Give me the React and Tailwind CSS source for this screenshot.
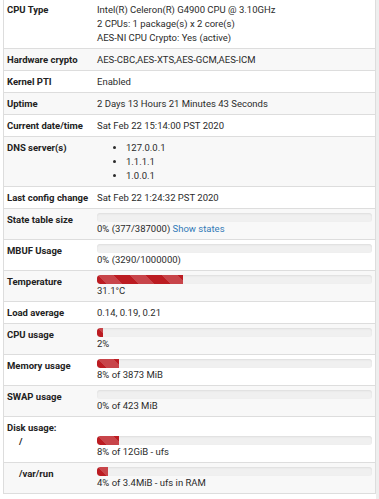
import React from "react";

const stripe =
  "bg-[#bc1c22] bg-[linear-gradient(45deg,rgba(255,255,255,.18)_25%,transparent_25%,transparent_50%,rgba(255,255,255,.18)_50%,rgba(255,255,255,.18)_75%,transparent_75%,transparent)] bg-[length:32px_32px]";

const Bar = ({ pct }) => (
  <div className="h-[9px] w-full rounded-[3px] bg-[#f0f0f0] shadow-[inset_0_1px_2px_rgba(0,0,0,0.08)] overflow-hidden">
    {pct > 0 && <div className={`h-full rounded-l-[3px] ${stripe}`} style={{ width: `${pct}%` }} />}
  </div>
);

const Row = ({ label, children, shade, first, indent }) => (
  <div className={`flex border-b border-[#dddddd] ${shade ? "bg-[#f8f8f8]" : "bg-white"} ${first ? "pt-[3px]" : "pt-[4px]"} pb-[3px]`}>
    <div className={`w-[89px] shrink-0 font-bold text-[#222] ${indent ? "pl-[15px]" : "pl-[3px]"}`}>{label}</div>
    <div className="flex-1 min-w-0 pl-[4px] pr-[3px] text-[#2b2b2b]">{children}</div>
  </div>
);

const BarRow = ({ label, pct, text, shade, indent }) => (
  <Row label={label} shade={shade} indent={indent}>
    <Bar pct={pct} />
    <div>{text}</div>
  </Row>
);

export default function App() {
  return (
    <div className="w-[379px] h-[499px] bg-white flex font-[Roboto,sans-serif] text-[9.5px] leading-[14px] overflow-hidden">
      <div className="w-[3px] shrink-0" />
      <div className="w-[373px] shrink-0 self-start border-l border-r border-[#dddddd]">
        <Row label="CPU Type" first>
          <div>Intel(R) Celeron(R) G4900 CPU @ 3.10GHz</div>
          <div>2 CPUs: 1 package(s) x 2 core(s)</div>
          <div>AES-NI CPU Crypto: Yes (active)</div>
        </Row>
        <Row label="Hardware crypto" shade>AES-CBC,AES-XTS,AES-GCM,AES-ICM</Row>
        <Row label="Kernel PTI">Enabled</Row>
        <Row label="Uptime" shade>2 Days 13 Hours 21 Minutes 43 Seconds</Row>
        <Row label="Current date/time">Sat Feb 22 15:14:00 PST 2020</Row>
        <Row label="DNS server(s)" shade>
          <ul className="list-disc pl-[29px]">
            <li>127.0.0.1</li>
            <li>1.1.1.1</li>
            <li>1.0.0.1</li>
          </ul>
        </Row>
        <Row label="Last config change">Sat Feb 22 1:24:32 PST 2020</Row>
        <BarRow
          label="State table size"
          pct={0}
          shade
          text={
            <>
              0% (377/387000) <span className="text-[#337ab7]">Show states</span>
            </>
          }
        />
        <BarRow label="MBUF Usage" pct={0} text="0% (3290/1000000)" />
        <BarRow label="Temperature" pct={31.1} text="31.1°C" shade />
        <Row label="Load average">0.14, 0.19, 0.21</Row>
        <BarRow label="CPU usage" pct={2} text="2%" shade />
        <BarRow label="Memory usage" pct={8} text="8% of 3873 MiB" />
        <BarRow label="SWAP usage" pct={0} text="0% of 423 MiB" shade />
        <div className="border-b border-[#dddddd] bg-white pt-[4px] pb-[3px]">
          <div className="pl-[3px] font-bold text-[#222]">Disk usage:</div>
          <div className="flex">
            <div className="w-[89px] shrink-0 pl-[15px] font-bold text-[#222]">/</div>
            <div className="flex-1 min-w-0 pl-[4px] pr-[3px] pt-[1px] text-[#2b2b2b]">
              <Bar pct={8} />
              <div>8% of 12GiB - ufs</div>
            </div>
          </div>
        </div>
        <BarRow label="/var/run" pct={4} text="4% of 3.4MiB - ufs in RAM" shade indent />
      </div>
      <div className="w-[3px] shrink-0 bg-[#eeeeee]" />
    </div>
  );
}
